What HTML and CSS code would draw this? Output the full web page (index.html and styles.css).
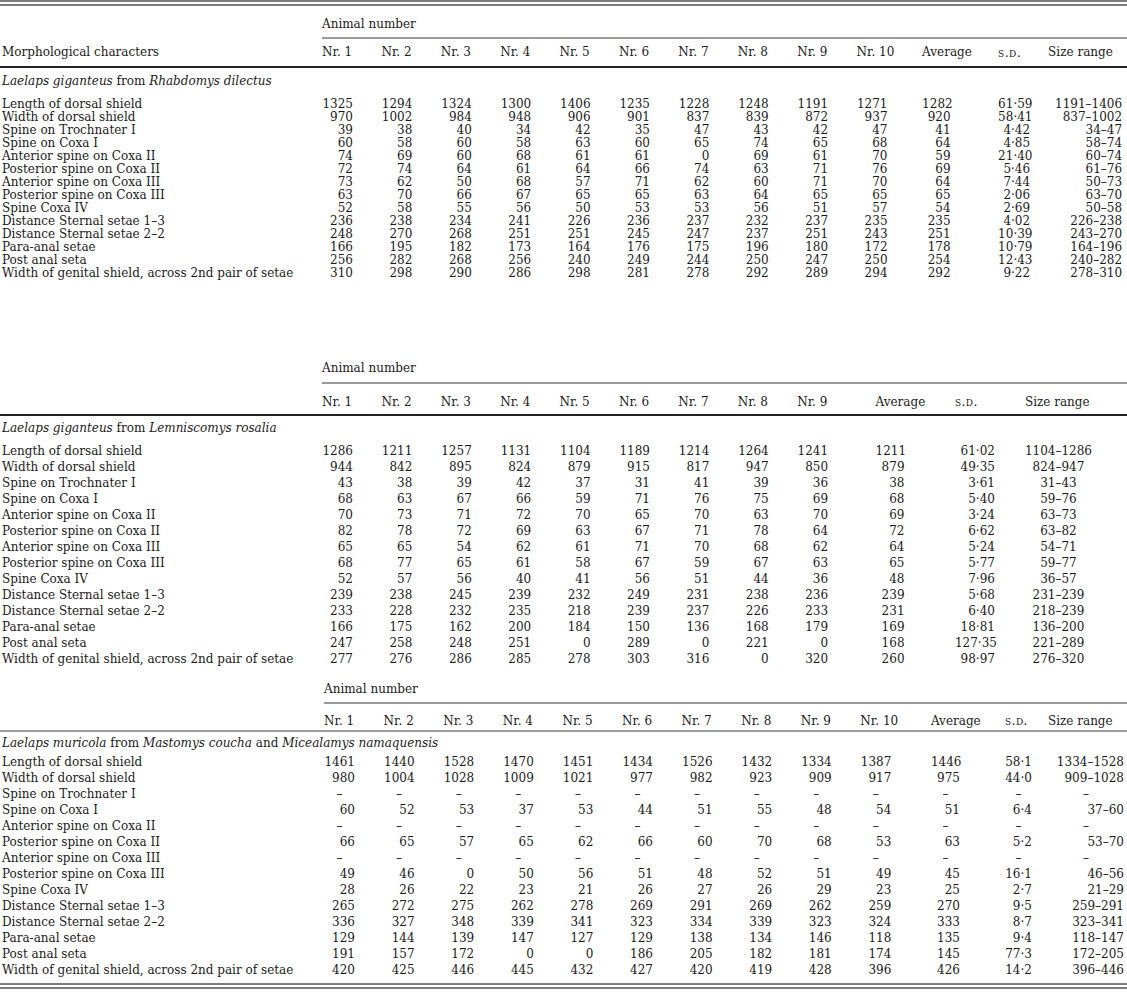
FILE: index.html
```html
<!DOCTYPE html>
<html>
<head>
<meta charset="utf-8">
<title>Laelaps measurements</title>
<link rel="stylesheet" href="styles.css">
</head>
<body>
<section class="sec s1">
  <div class="dbl"></div>
  <div class="an">Animal number</div>
  <div class="r h">
    <span class="l">Morphological characters</span>
    <span>Nr. 1</span><span>Nr. 2</span><span>Nr. 3</span><span>Nr. 4</span><span>Nr. 5</span><span>Nr. 6</span><span>Nr. 7</span><span>Nr. 8</span><span>Nr. 9</span><span>Nr. 10</span><span>Average</span><span class="sd">s.d.</span><span>Size range</span>
  </div>
  <div class="sp"><i>Laelaps giganteus</i> from <i>Rhabdomys dilectus</i></div>
  <div class="rows">
    <div class="r b"><span class="l">Length of dorsal shield</span><span>1325</span><span>1294</span><span>1324</span><span>1300</span><span>1406</span><span>1235</span><span>1228</span><span>1248</span><span>1191</span><span>1271</span><span>1282</span><span>61·59</span><span>1191–1406</span></div>
    <div class="r b"><span class="l">Width of dorsal shield</span><span>970</span><span>1002</span><span>984</span><span>948</span><span>906</span><span>901</span><span>837</span><span>839</span><span>872</span><span>937</span><span>920</span><span>58·41</span><span>837–1002</span></div>
    <div class="r b"><span class="l">Spine on Trochnater I</span><span>39</span><span>38</span><span>40</span><span>34</span><span>42</span><span>35</span><span>47</span><span>43</span><span>42</span><span>47</span><span>41</span><span>4·42</span><span>34–47</span></div>
    <div class="r b"><span class="l">Spine on Coxa I</span><span>60</span><span>58</span><span>60</span><span>58</span><span>63</span><span>60</span><span>65</span><span>74</span><span>65</span><span>68</span><span>64</span><span>4·85</span><span>58–74</span></div>
    <div class="r b"><span class="l">Anterior spine on Coxa II</span><span>74</span><span>69</span><span>60</span><span>68</span><span>61</span><span>61</span><span>0</span><span>69</span><span>61</span><span>70</span><span>59</span><span>21·40</span><span>60–74</span></div>
    <div class="r b"><span class="l">Posterior spine on Coxa II</span><span>72</span><span>74</span><span>64</span><span>61</span><span>64</span><span>66</span><span>74</span><span>63</span><span>71</span><span>76</span><span>69</span><span>5·46</span><span>61–76</span></div>
    <div class="r b"><span class="l">Anterior spine on Coxa III</span><span>73</span><span>62</span><span>50</span><span>68</span><span>57</span><span>71</span><span>62</span><span>60</span><span>71</span><span>70</span><span>64</span><span>7·44</span><span>50–73</span></div>
    <div class="r b"><span class="l">Posterior spine on Coxa III</span><span>63</span><span>70</span><span>66</span><span>67</span><span>65</span><span>65</span><span>63</span><span>64</span><span>65</span><span>65</span><span>65</span><span>2·06</span><span>63–70</span></div>
    <div class="r b"><span class="l">Spine Coxa IV</span><span>52</span><span>58</span><span>55</span><span>56</span><span>50</span><span>53</span><span>53</span><span>56</span><span>51</span><span>57</span><span>54</span><span>2·69</span><span>50–58</span></div>
    <div class="r b"><span class="l">Distance Sternal setae 1–3</span><span>236</span><span>238</span><span>234</span><span>241</span><span>226</span><span>236</span><span>237</span><span>232</span><span>237</span><span>235</span><span>235</span><span>4·02</span><span>226–238</span></div>
    <div class="r b"><span class="l">Distance Sternal setae 2–2</span><span>248</span><span>270</span><span>268</span><span>251</span><span>251</span><span>245</span><span>247</span><span>237</span><span>251</span><span>243</span><span>251</span><span>10·39</span><span>243–270</span></div>
    <div class="r b"><span class="l">Para-anal setae</span><span>166</span><span>195</span><span>182</span><span>173</span><span>164</span><span>176</span><span>175</span><span>196</span><span>180</span><span>172</span><span>178</span><span>10·79</span><span>164–196</span></div>
    <div class="r b"><span class="l">Post anal seta</span><span>256</span><span>282</span><span>268</span><span>256</span><span>240</span><span>249</span><span>244</span><span>250</span><span>247</span><span>250</span><span>254</span><span>12·43</span><span>240–282</span></div>
    <div class="r b"><span class="l">Width of genital shield, across 2nd pair of setae</span><span>310</span><span>298</span><span>290</span><span>286</span><span>298</span><span>281</span><span>278</span><span>292</span><span>289</span><span>294</span><span>292</span><span>9·22</span><span>278–310</span></div>
  </div>
</section>

<section class="sec s2">
  <div class="an">Animal number</div>
  <div class="r h">
    <span class="l"></span>
    <span>Nr. 1</span><span>Nr. 2</span><span>Nr. 3</span><span>Nr. 4</span><span>Nr. 5</span><span>Nr. 6</span><span>Nr. 7</span><span>Nr. 8</span><span>Nr. 9</span><span>Average</span><span class="sd">s.d.</span><span>Size range</span>
  </div>
  <div class="sp"><i>Laelaps giganteus</i> from <i>Lemniscomys rosalia</i></div>
  <div class="rows">
    <div class="r b"><span class="l">Length of dorsal shield</span><span>1286</span><span>1211</span><span>1257</span><span>1131</span><span>1104</span><span>1189</span><span>1214</span><span>1264</span><span>1241</span><span>1211</span><span>61·02</span><span>1104–1286</span></div>
    <div class="r b"><span class="l">Width of dorsal shield</span><span>944</span><span>842</span><span>895</span><span>824</span><span>879</span><span>915</span><span>817</span><span>947</span><span>850</span><span>879</span><span>49·35</span><span>824–947</span></div>
    <div class="r b"><span class="l">Spine on Trochnater I</span><span>43</span><span>38</span><span>39</span><span>42</span><span>37</span><span>31</span><span>41</span><span>39</span><span>36</span><span>38</span><span>3·61</span><span>31–43</span></div>
    <div class="r b"><span class="l">Spine on Coxa I</span><span>68</span><span>63</span><span>67</span><span>66</span><span>59</span><span>71</span><span>76</span><span>75</span><span>69</span><span>68</span><span>5·40</span><span>59–76</span></div>
    <div class="r b"><span class="l">Anterior spine on Coxa II</span><span>70</span><span>73</span><span>71</span><span>72</span><span>70</span><span>65</span><span>70</span><span>63</span><span>70</span><span>69</span><span>3·24</span><span>63–73</span></div>
    <div class="r b"><span class="l">Posterior spine on Coxa II</span><span>82</span><span>78</span><span>72</span><span>69</span><span>63</span><span>67</span><span>71</span><span>78</span><span>64</span><span>72</span><span>6·62</span><span>63–82</span></div>
    <div class="r b"><span class="l">Anterior spine on Coxa III</span><span>65</span><span>65</span><span>54</span><span>62</span><span>61</span><span>71</span><span>70</span><span>68</span><span>62</span><span>64</span><span>5·24</span><span>54–71</span></div>
    <div class="r b"><span class="l">Posterior spine on Coxa III</span><span>68</span><span>77</span><span>65</span><span>61</span><span>58</span><span>67</span><span>59</span><span>67</span><span>63</span><span>65</span><span>5·77</span><span>59–77</span></div>
    <div class="r b"><span class="l">Spine Coxa IV</span><span>52</span><span>57</span><span>56</span><span>40</span><span>41</span><span>56</span><span>51</span><span>44</span><span>36</span><span>48</span><span>7·96</span><span>36–57</span></div>
    <div class="r b"><span class="l">Distance Sternal setae 1–3</span><span>239</span><span>238</span><span>245</span><span>239</span><span>232</span><span>249</span><span>231</span><span>238</span><span>236</span><span>239</span><span>5·68</span><span>231–239</span></div>
    <div class="r b"><span class="l">Distance Sternal setae 2–2</span><span>233</span><span>228</span><span>232</span><span>235</span><span>218</span><span>239</span><span>237</span><span>226</span><span>233</span><span>231</span><span>6·40</span><span>218–239</span></div>
    <div class="r b"><span class="l">Para-anal setae</span><span>166</span><span>175</span><span>162</span><span>200</span><span>184</span><span>150</span><span>136</span><span>168</span><span>179</span><span>169</span><span>18·81</span><span>136–200</span></div>
    <div class="r b"><span class="l">Post anal seta</span><span>247</span><span>258</span><span>248</span><span>251</span><span>0</span><span>289</span><span>0</span><span>221</span><span>0</span><span>168</span><span>127·35</span><span>221–289</span></div>
    <div class="r b"><span class="l">Width of genital shield, across 2nd pair of setae</span><span>277</span><span>276</span><span>286</span><span>285</span><span>278</span><span>303</span><span>316</span><span>0</span><span>320</span><span>260</span><span>98·97</span><span>276–320</span></div>
  </div>
</section>

<section class="sec s3">
  <div class="an">Animal number</div>
  <div class="r h">
    <span class="l"></span>
    <span>Nr. 1</span><span>Nr. 2</span><span>Nr. 3</span><span>Nr. 4</span><span>Nr. 5</span><span>Nr. 6</span><span>Nr. 7</span><span>Nr. 8</span><span>Nr. 9</span><span>Nr. 10</span><span>Average</span><span class="sd">s.d.</span><span>Size range</span>
  </div>
  <div class="sp"><i>Laelaps muricola</i> from <i>Mastomys coucha</i> and <i>Micealamys namaquensis</i></div>
  <div class="rows">
    <div class="r b"><span class="l">Length of dorsal shield</span><span>1461</span><span>1440</span><span>1528</span><span>1470</span><span>1451</span><span>1434</span><span>1526</span><span>1432</span><span>1334</span><span>1387</span><span>1446</span><span>58·1</span><span>1334–1528</span></div>
    <div class="r b"><span class="l">Width of dorsal shield</span><span>980</span><span>1004</span><span>1028</span><span>1009</span><span>1021</span><span>977</span><span>982</span><span>923</span><span>909</span><span>917</span><span>975</span><span>44·0</span><span>909–1028</span></div>
    <div class="r b"><span class="l">Spine on Trochnater I</span><span class="d">–</span><span class="d">–</span><span class="d">–</span><span class="d">–</span><span class="d">–</span><span class="d">–</span><span class="d">–</span><span class="d">–</span><span class="d">–</span><span class="d">–</span><span class="d">–</span><span class="d">–</span><span class="d">–</span></div>
    <div class="r b"><span class="l">Spine on Coxa I</span><span>60</span><span>52</span><span>53</span><span>37</span><span>53</span><span>44</span><span>51</span><span>55</span><span>48</span><span>54</span><span>51</span><span>6·4</span><span>37–60</span></div>
    <div class="r b"><span class="l">Anterior spine on Coxa II</span><span class="d">–</span><span class="d">–</span><span class="d">–</span><span class="d">–</span><span class="d">–</span><span class="d">–</span><span class="d">–</span><span class="d">–</span><span class="d">–</span><span class="d">–</span><span class="d">–</span><span class="d">–</span><span class="d">–</span></div>
    <div class="r b"><span class="l">Posterior spine on Coxa II</span><span>66</span><span>65</span><span>57</span><span>65</span><span>62</span><span>66</span><span>60</span><span>70</span><span>68</span><span>53</span><span>63</span><span>5·2</span><span>53–70</span></div>
    <div class="r b"><span class="l">Anterior spine on Coxa III</span><span class="d">–</span><span class="d">–</span><span class="d">–</span><span class="d">–</span><span class="d">–</span><span class="d">–</span><span class="d">–</span><span class="d">–</span><span class="d">–</span><span class="d">–</span><span class="d">–</span><span class="d">–</span><span class="d">–</span></div>
    <div class="r b"><span class="l">Posterior spine on Coxa III</span><span>49</span><span>46</span><span>0</span><span>50</span><span>56</span><span>51</span><span>48</span><span>52</span><span>51</span><span>49</span><span>45</span><span>16·1</span><span>46–56</span></div>
    <div class="r b"><span class="l">Spine Coxa IV</span><span>28</span><span>26</span><span>22</span><span>23</span><span>21</span><span>26</span><span>27</span><span>26</span><span>29</span><span>23</span><span>25</span><span>2·7</span><span>21–29</span></div>
    <div class="r b"><span class="l">Distance Sternal setae 1–3</span><span>265</span><span>272</span><span>275</span><span>262</span><span>278</span><span>269</span><span>291</span><span>269</span><span>262</span><span>259</span><span>270</span><span>9·5</span><span>259–291</span></div>
    <div class="r b"><span class="l">Distance Sternal setae 2–2</span><span>336</span><span>327</span><span>348</span><span>339</span><span>341</span><span>323</span><span>334</span><span>339</span><span>323</span><span>324</span><span>333</span><span>8·7</span><span>323–341</span></div>
    <div class="r b"><span class="l">Para-anal setae</span><span>129</span><span>144</span><span>139</span><span>147</span><span>127</span><span>129</span><span>138</span><span>134</span><span>146</span><span>118</span><span>135</span><span>9·4</span><span>118–147</span></div>
    <div class="r b"><span class="l">Post anal seta</span><span>191</span><span>157</span><span>172</span><span>0</span><span>0</span><span>186</span><span>205</span><span>182</span><span>181</span><span>174</span><span>145</span><span>77·3</span><span>172–205</span></div>
    <div class="r b"><span class="l">Width of genital shield, across 2nd pair of setae</span><span>420</span><span>425</span><span>446</span><span>445</span><span>432</span><span>427</span><span>420</span><span>419</span><span>428</span><span>396</span><span>426</span><span>14·2</span><span>396–446</span></div>
  </div>
  <div class="dbl bottom"></div>
</section>
</body>
</html>
```

FILE: styles.css
```css
html, body {
  margin: 0;
  padding: 0;
  background: #ffffff;
}

body {
  width: 1127px;
  font-family: "DejaVu Serif", "Liberation Serif", serif;
  font-size: 12px;
  color: #1a1a1a;
}

.dbl {
  height: 2px;
  border-top: 2px solid #7d7d7d;
  border-bottom: 2px solid #7d7d7d;
}

.r {
  display: grid;
  white-space: nowrap;
}

.r > span {
  justify-self: start;
}

.l {
  padding-left: 2px;
}

.sp {
  padding-left: 2px;
  white-space: nowrap;
}

.sd {
  font-variant: small-caps;
  font-size: 12.5px;
  letter-spacing: 0.4px;
}

.an {
  border-bottom: 2px solid #9a9a9a;
  white-space: nowrap;
}

/* ---------- section 1 ---------- */
.s1 .r,
.s1 .an,
.s1 .sp {
  line-height: 13px;
}

.s1 .r {
  grid-template-columns: 322px repeat(9, 59.4px) 65.6px 76px 50px 1fr;
}

.s1 .an {
  margin: 12px 0 0 322px;
  padding-bottom: 6px;
}

.s1 .h {
  margin-top: 7px;
  padding-bottom: 7px;
  border-bottom: 2px solid #222222;
}

.s1 .sp {
  margin-top: 7px;
}

.s1 .rows {
  margin-top: 10px;
}

.s1 .b > span:nth-child(n+2) { width: 31px; text-align: right; }
.s1 .b > span:nth-child(12) { width: 28.5px; }
.s1 .b > span:nth-child(13) { width: 32px; }
.s1 .b > span:nth-child(14) { width: 74px; }

/* ---------- section 2 ---------- */
.s2 .r,
.s2 .an,
.s2 .sp {
  line-height: 16px;
}

.s2 .r {
  grid-template-columns: 322px repeat(8, 59.4px) 78.4px 79.4px 70px 1fr;
}

.s2 .an {
  margin: 80px 0 0 322px;
  padding-bottom: 6px;
}

.s2 .h {
  margin-top: 10px;
  padding-bottom: 4px;
  border-bottom: 2px solid #222222;
}

.s2 .sp {
  margin-top: 4px;
}

.s2 .rows {
  margin-top: 7px;
}

.s2 .b > span:nth-child(n+2) { width: 31px; text-align: right; }
.s2 .b > span:nth-child(11) { width: 29px; }
.s2 .b > span:nth-child(12) { width: 40px; }
.s2 .b > span:nth-child(13) { width: 67px; text-align: center; }

/* ---------- section 3 ---------- */
.s3 .r,
.s3 .an,
.s3 .sp {
  line-height: 16px;
}

.s3 .r {
  grid-template-columns: 324px repeat(9, 59.6px) 70.6px 74px 43px 1fr;
}

.s3 .an {
  margin: 14px 0 0 324px;
  padding-bottom: 5px;
}

.s3 .h {
  margin-top: 9px;
  padding-bottom: 1px;
  border-bottom: 2px solid #9a9a9a;
}

.s3 .sp {
  margin-top: 3px;
}

.s3 .rows {
  margin-top: 3px;
}

.s3 .b > span:nth-child(n+2) { width: 31px; text-align: right; }
.s3 .b > span:nth-child(12) { width: 29px; }
.s3 .b > span:nth-child(13) { width: 27px; }
.s3 .b > span:nth-child(14) { width: 76px; }

.sec .b > span.d {
  text-align: center;
}

.dbl.bottom {
  margin-top: 5px;
}
```
